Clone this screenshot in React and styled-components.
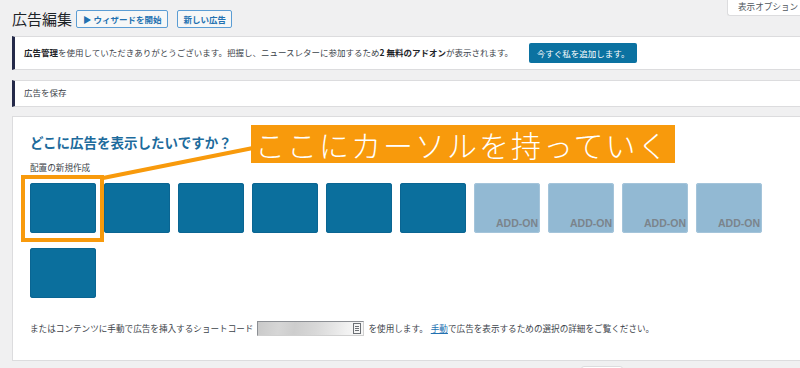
import React from "react";
import styled, { createGlobalStyle } from "styled-components";

const Global = createGlobalStyle`
  html, body {
    margin: 0;
    padding: 0;
    background: #f0f0f1;
    overflow: hidden;
  }
  body {
    font-family: "Noto Sans CJK JP", "Liberation Sans", sans-serif;
    color: #3c434a;
  }
`;

// page //

const Page = styled.div`
  width: 800px;
  height: 368px;
  padding-left: 12px;
  box-sizing: border-box;
  overflow: hidden;
`;

const Header = styled.div`
  display: flex;
  align-items: flex-start;
  height: 36px;
`;

const Title = styled.h1`
  margin: 10px 0 0;
  font-size: 15px;
  line-height: 18px;
  font-weight: 400;
  color: #1d2327;
`;

const HeadButton = styled.button`
  margin: 10px 0 0 ${(p) => p.$gap}px;
  height: 18px;
  padding: 0 ${(p) => p.$pad}px;
  border: 1px solid #5b9dd4;
  border-radius: 2px;
  background: #f6f7f7;
  color: #2271b1;
  font-family: inherit;
  font-size: 8.5px;
  font-weight: 700;
  line-height: 16px;
  white-space: nowrap;
`;

const ScreenOptions = styled.div`
  margin-left: auto;
  height: 15px;
  padding: 0 0 0 10px;
  width: 62px;
  background: #fff;
  border: 1px solid #dcdcde;
  border-top: none;
  border-right: none;
  border-radius: 0 0 0 3px;
  font-size: 8.6px;
  line-height: 13px;
  color: #50575e;
  white-space: nowrap;
  overflow: hidden;
`;

const Notice = styled.div`
  display: flex;
  align-items: center;
  height: ${(p) => p.$h}px;
  box-sizing: border-box;
  margin-bottom: ${(p) => p.$mb}px;
  padding-left: 9px;
  background: #fff;
  border: 1px solid #dcdcde;
  border-left: 3px solid #252a4a;
  border-right: none;
  font-size: 8.5px;
  color: #3c434a;
  white-space: nowrap;
`;

const NoticeText = styled.span`
  margin-top: -3px;
  b {
    font-weight: 700;
    color: #1d2327;
  }
`;

const PrimaryButton = styled.button`
  margin-left: 16px;
  width: 108px;
  height: 20px;
  padding: 0;
  border: none;
  border-radius: 2px;
  background: #0b72a1;
  color: #fff;
  font-family: inherit;
  font-size: 8.5px;
  line-height: 20px;
`;

const Panel = styled.div`
  position: relative;
  box-sizing: border-box;
  height: 245px;
  padding: 15px 0 0 17px;
  background: #fff;
  border: 1px solid #dcdcde;
  border-right: none;
`;

const Heading = styled.h2`
  margin: 0;
  font-size: 13.5px;
  line-height: 20px;
  font-weight: 700;
  color: #1d6b9c;
`;

const SubLabel = styled.div`
  margin-top: 9px;
  font-size: 8.6px;
  line-height: 12px;
  color: #3c434a;
`;

const Tiles = styled.div`
  margin-top: 10px;
  display: grid;
  grid-template-columns: repeat(10, 66px);
  grid-auto-rows: 50px;
  column-gap: 8px;
  row-gap: 15px;
`;

const Tile = styled.div`
  position: relative;
  border-radius: 3px;
  background: ${(p) => (p.$addon ? "#92b9d3" : "#0b6f9d")};
  box-shadow: inset 0 0 0 1px ${(p) => (p.$addon ? "#a4c4da" : "#0a6592")};
`;

const AddOn = styled.span`
  position: absolute;
  right: 2px;
  bottom: 5px;
  font-family: "Liberation Sans", Arial, sans-serif;
  font-size: 10.5px;
  font-weight: 700;
  line-height: 10px;
  color: #7b848c;
`;

const Footnote = styled.div`
  margin-top: 22px;
  display: flex;
  align-items: center;
  height: 16px;
  font-size: 8.6px;
  color: #3c434a;
  white-space: nowrap;
`;

const Shortcode = styled.div`
  display: flex;
  align-items: center;
  justify-content: flex-end;
  width: 107px;
  height: 15px;
  margin: 0 4px;
  box-sizing: border-box;
  border: 1px solid #8c8f94;
  border-right-color: #d0d0d0;
  border-bottom-color: #d0d0d0;
  background: linear-gradient(
    100deg,
    #c9c9c9 0%,
    #d6d6d6 20%,
    #cdcdcd 35%,
    #d8d8d8 55%,
    #e6e6e6 72%,
    #f2f2f2 85%,
    #f7f7f7 100%
  );
`;

const Link = styled.a`
  color: #2271b1;
  text-decoration: underline;
  margin-left: 3px;
`;

const BottomTab = styled.div`
  margin: 5px 0 0 569px;
  width: 40px;
  height: 6px;
  background: #fff;
  border: 1px solid #dcdcde;
  border-radius: 3px 3px 0 0;
`;

// annotation overlay //

const Highlight = styled.div`
  position: absolute;
  left: 8px;
  top: 58px;
  width: 83px;
  height: 67px;
  box-sizing: border-box;
  border: 4px solid #f89a0c;
`;

const Pointer = styled.svg`
  position: absolute;
  left: 0;
  top: 0;
  overflow: visible;
`;

const Callout = styled.div`
  position: absolute;
  left: 238px;
  top: 8px;
  width: 424px;
  height: 38px;
  box-sizing: border-box;
  padding-left: 4px;
  background: #f89a0c;
  color: #fff;
  font-size: 30px;
  font-weight: 300;
  letter-spacing: 2px;
  line-height: 38px;
  white-space: nowrap;
`;

const CopyIcon = () => (
  <svg width="10" height="11" viewBox="0 0 10 11" style={{ marginRight: 1 }}>
    <rect x="1.5" y="0.5" width="7" height="10" fill="none" stroke="#6c7075" />
    <line x1="3" y1="3.5" x2="7" y2="3.5" stroke="#6c7075" />
    <line x1="3" y1="5.5" x2="7" y2="5.5" stroke="#6c7075" />
    <line x1="3" y1="7.5" x2="7" y2="7.5" stroke="#6c7075" />
  </svg>
);

const tiles = [
  false, false, false, false, false, false, true, true, true, true, false,
];

export default function App() {
  return (
    <Page>
      <Global />
      <Header>
        <Title>広告編集</Title>
        <HeadButton $gap={4} $pad={6}>▶ ウィザードを開始</HeadButton>
        <HeadButton $gap={9} $pad={5}>新しい広告</HeadButton>
        <ScreenOptions>表示オプション</ScreenOptions>
      </Header>

      <Notice $h={34} $mb={10}>
        <NoticeText>
          <b>広告管理</b>を使用していただきありがとうございます。把握し、ニュースレターに参加するため<b>2 無料のアドオン</b>が表示されます。
        </NoticeText>
        <PrimaryButton>今すぐ私を追加します。</PrimaryButton>
      </Notice>

      <Notice $h={27} $mb={9}>
        <NoticeText>広告を保存</NoticeText>
      </Notice>

      <Panel>
        <Heading>どこに広告を表示したいですか？</Heading>
        <SubLabel>配置の新規作成</SubLabel>
        <Tiles>
          {tiles.map((addon, i) => (
            <Tile key={i} $addon={addon}>
              {addon && <AddOn>ADD-ON</AddOn>}
            </Tile>
          ))}
        </Tiles>
        <Footnote>
          またはコンテンツに手動で広告を挿入するショートコード
          <Shortcode>
            <CopyIcon />
          </Shortcode>
          を使用します。
          <Link>手動</Link>
          で広告を表示するための選択の詳細をご覧ください。
        </Footnote>

        <Highlight />
        <Pointer width="1" height="1">
          <line x1="90" y1="61" x2="240" y2="31" stroke="#f89a0c" strokeWidth="4" />
        </Pointer>
        <Callout>ここにカーソルを持っていく</Callout>
      </Panel>
      <BottomTab />
    </Page>
  );
}
